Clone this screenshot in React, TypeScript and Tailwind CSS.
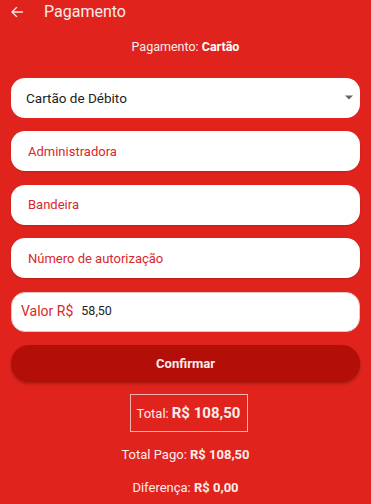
import React from "react";

function Field({ label }: { label: string }) {
  return (
    <div className="h-[40px] rounded-[14px] bg-white flex items-center px-[17px] shadow-[0_1px_2px_rgba(0,0,0,0.15)]">
      <span className="text-[13px] text-[#d8282a]">{label}</span>
    </div>
  );
}

export default function App() {
  return (
    <div
      className="w-[371px] h-[504px] bg-[#e0241d] text-white overflow-hidden"
      style={{ fontFamily: "Roboto, 'Noto Sans', sans-serif" }}
    >
      <div className="h-[23px] flex items-center pl-[10px]">
        <svg width="14" height="14" viewBox="0 0 24 24" fill="none" stroke="#fbe9e9" strokeWidth="2.4" strokeLinecap="square">
          <path d="M21 12H4M11 4.5L3.5 12 11 19.5" />
        </svg>
        <span className="ml-[20px] text-[16px] text-[#fbecec]">Pagamento</span>
      </div>
      <div className="mt-[15px] text-center text-[12.5px] text-[#fbecec]">
        Pagamento: <b className="font-bold text-white">Cartão</b>
      </div>
      <div className="px-[11px] mt-[21px] flex flex-col gap-[13.5px]">
        <div className="h-[40px] rounded-[14px] bg-white flex items-center pl-[15px] pr-[7px] justify-between">
          <span className="text-[13.5px] text-[#222]">Cartão de Débito</span>
          <svg width="8" height="5" viewBox="0 0 10 5">
            <path d="M0 0H10L5 5Z" fill="#666" />
          </svg>
        </div>
        <Field label="Administradora" />
        <Field label="Bandeira" />
        <Field label="Número de autorização" />
        <div className="h-[40px] rounded-[14px] bg-white flex items-center px-[9px] border border-[#e8c5c5]">
          <span className="text-[14px] text-[#d8282a]">Valor R$</span>
          <span className="ml-[8px] text-[12.5px] text-[#222]">58,50</span>
        </div>
        <div className="h-[37px] rounded-[18px] bg-[#b30f08] flex items-center justify-center shadow-[0_2px_3px_rgba(0,0,0,0.25)]">
          <span className="text-[13px] font-bold text-[#fbecec]">Confirmar</span>
        </div>
      </div>
      <div className="flex justify-center mt-[12px]">
        <div className="w-[118px] h-[38px] ml-[6px] border border-[#f3b3b0] flex items-center justify-center">
          <span className="text-[13px] text-[#fbecec]">Total: </span>
          <span className="ml-[3px] text-[15px] font-bold text-[#fbecec]">R$ 108,50</span>
        </div>
      </div>
      <div className="mt-[13px] text-center text-[13px] text-[#fbecec]">
        Total Pago: <b className="font-bold">R$ 108,50</b>
      </div>
      <div className="mt-[13px] text-center text-[13px] text-[#fbecec]">
        Diferença: <b className="font-bold">R$ 0,00</b>
      </div>
    </div>
  );
}
